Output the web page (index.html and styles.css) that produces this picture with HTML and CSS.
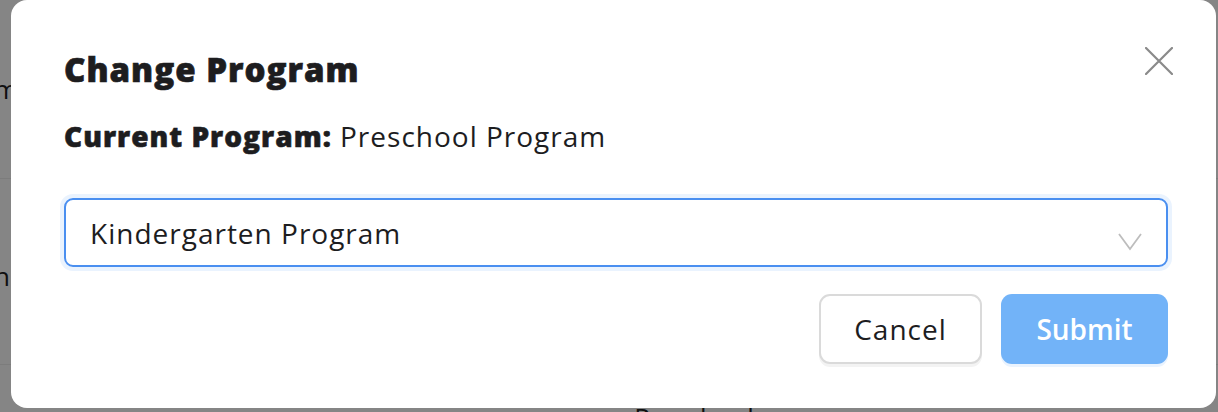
FILE: index.html
```html
<!DOCTYPE html>
<html lang="en">
<head>
    <meta charset="UTF-8">
    <meta name="viewport" content="width=device-width, initial-scale=1.0">
    <title>Change Program</title>
    <link rel="stylesheet" href="styles.css">
</head>
<body>
    <!-- page behind the dialog -->
    <div class="page">
        <div class="page-row"><span>m</span></div>
        <div class="page-row"><span>n</span></div>
        <div class="page-foot">Preschool</div>
    </div>

    <div class="backdrop"></div>

    <!-- dialog -->
    <div class="modal">
        <div class="modal-head">
            <h1>Change Program</h1>
            <button class="close-btn" aria-label="Close">
                <svg width="28" height="28" viewBox="0 0 28 28">
                    <path d="M1 1 L27 27 M27 1 L1 27" stroke="#8a8a8a" stroke-width="2.2" stroke-linecap="round" fill="none"/>
                </svg>
            </button>
        </div>
        <p class="current"><strong>Current Program:</strong> Preschool Program</p>

        <div class="select">
            <span>Kindergarten Program</span>
            <svg class="chevron" width="24" height="18" viewBox="0 0 24 18">
                <path d="M1 1 L12 16 L23 1" stroke="#bdbdbd" stroke-width="1.8" fill="none"/>
            </svg>
        </div>

        <div class="actions">
            <button class="btn btn-cancel">Cancel</button>
            <button class="btn btn-submit">Submit</button>
        </div>
    </div>
</body>
</html>
```

FILE: styles.css
```css
body {
    margin: 0;
    font-family: "Open Sans", "Noto Sans", sans-serif;
    color: #1d1d1f;
    background-color: #fff;
    height: 412px;
    overflow: hidden;
}
.page-row {
    height: 178px;
    display: flex;
    align-items: center;
    border-bottom: 1px solid #eee;
    font-size: 26px;
}
.page-row span {
    margin-left: -6px;
}
.page-row + .page-row {
    height: 186px;
    padding-top: 8px;
    box-sizing: border-box;
}
.page-foot {
    text-align: center;
    padding-top: 34px;
    font-size: 26px;
    padding-left: 170px;
}
.backdrop {
    position: fixed;
    inset: 0;
    background-color: rgba(0, 0, 0, 0.48);
}
.modal {
    position: absolute;
    left: 11px;
    top: 0;
    width: 1205px;
    height: 408px;
    box-sizing: border-box;
    background-color: #fff;
    border-radius: 16px;
    padding: 46px 48px 0 53px;
}
.modal-head {
    display: flex;
    justify-content: space-between;
    align-items: flex-start;
}
h1 {
    margin: 0;
    font-size: 33px;
    font-weight: 800;
    line-height: 48px;
    letter-spacing: 1px;
    color: #1d1d1f;
    -webkit-text-stroke: 0.7px #1d1d1f;
}
.close-btn {
    border: none;
    background: none;
    padding: 0;
    margin: 1px -5px 0 0;
    cursor: pointer;
    line-height: 0;
}
.current {
    margin: 22px 0 0;
    font-size: 28px;
    line-height: 40px;
    letter-spacing: 1px;
}
.current strong {
    font-weight: 800;
    -webkit-text-stroke: 0.6px #1d1d1f;
}
.select {
    margin-top: 42px;
    height: 69px;
    box-sizing: border-box;
    border: 2px solid #4a8ff0;
    border-radius: 9px;
    box-shadow: 0 0 0 4px #eaf3fe;
    display: flex;
    align-items: center;
    justify-content: space-between;
    padding: 0 24px 0 24px;
    font-size: 28px;
    letter-spacing: 1px;
}
.chevron {
    margin-top: 18px;
}
.actions {
    display: flex;
    justify-content: flex-end;
    gap: 19px;
    margin-top: 27px;
}
.btn {
    font-family: inherit;
    font-size: 28px;
    height: 70px;
    border-radius: 11px;
    cursor: pointer;
}
.btn-cancel {
    width: 163px;
    background-color: #fff;
    border: 2px solid #dadada;
    color: #1d1d1f;
    letter-spacing: 1px;
    box-shadow: 0 3px 0 #f3f3f3;
}
.btn-submit {
    width: 167px;
    background-color: #72b3f8;
    border: none;
    color: #fff;
    font-weight: 600;
    box-shadow: 0 3px 0 #eaf3fe;
}
```
